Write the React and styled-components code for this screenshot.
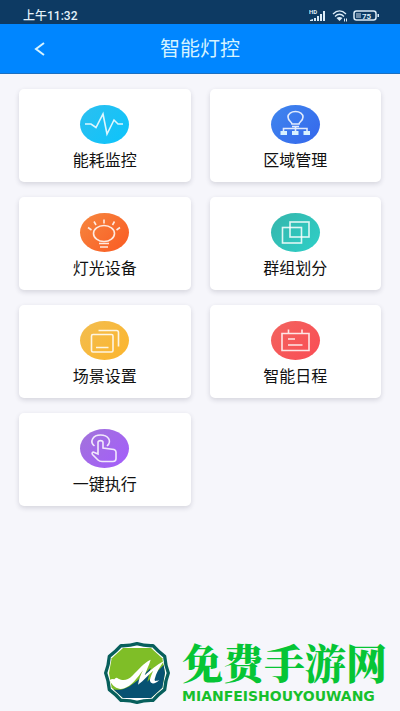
import React from "react";
import styled, { createGlobalStyle } from "styled-components";

const PulseIcon = () => (
  <path d="M5 19h6l5 3.5L23 9l4 20 7-14 4 4h5" />
);

const AreaIcon = () => (
  <>
    <path d="M21 19c0-2-4-3-4-7 0-3 3.2-5.5 7.5-5.5S32 9 32 12c0 4-4 5-4 7zM21 21.5h7M24.5 22v4M12.5 26v-2.5H36V26" />
    <path
      fill="#d9f2ff"
      stroke="none"
      d="M9.5 26H16v4H9.5zM21 26h6.500v4H21zM32.5 26H39v4h-6.500z"
    />
  </>
);

const LightIcon = () => (
  <>
    <ellipse cx="24" cy="20.5" rx="10.5" ry="8" />
    <path d="M19 30.500h10M20 34h8M8 14.500l3.500 2.500M14 8.500l2 3.500M24 6.500v4M34.500 8.500l-2 3.500M40 14.500L36.500 17" />
  </>
);

const GroupIcon = () => (
  <>
    <rect x="11.5" y="14.5" width="19" height="15.5" />
    <rect x="19" y="9" width="19" height="15" />
  </>
);

const SceneIcon = () => (
  <>
    <rect x="11.5" y="13.5" width="21.5" height="17.5" rx="1.5" />
    <path d="M18.500 9.500h18c1.500 0 2 .5 2 2v14M16 26.500h12.500" />
  </>
);

const ScheduleIcon = () => (
  <path d="M11 12.500h27v17H11zM17.500 8.500v4M31 8.500v4M17 18h7M17 24h14.500" />
);

const TouchIcon = () => (
  <path d="M14.500 17C9 12.500 13 6 20.500 6s12 6 6.500 11M18 25V13.500c0-2.500 5-2.500 5 0V19l11 1.500c1.500.5 2 1 2 2.500v6.500c0 2-1 3-3 3H22c-2 0-3-.5-4-1.500l-5.500-5.500c-1-1.500 0-3 2-2z" />
);

const menuItems = [
  { name: "能耗监控", from: "#2cbff0", to: "#0cc4fb", icon: PulseIcon },
  { name: "区域管理", from: "#3f86ee", to: "#3567ec", icon: AreaIcon },
  { name: "灯光设备", from: "#f6873f", to: "#fa5a22", icon: LightIcon },
  { name: "群组划分", from: "#35b5ab", to: "#2ed0c8", icon: GroupIcon },
  { name: "场景设置", from: "#f2bd50", to: "#fcb52c", icon: SceneIcon },
  { name: "智能日程", from: "#f2645f", to: "#fa4c54", icon: ScheduleIcon },
  { name: "一键执行", from: "#a274da", to: "#a45cfc", icon: TouchIcon },
];

const StatusBar = () => (
  <StatusBarStyle>
    <time>上午11:32</time>
    <StatusIcons>
      <svg width="18" height="14" viewBox="0 0 18 14" fill="#dcecf8">
        <text x="0" y="5" fontSize="6" fontWeight="700">
          HD
        </text>
        <path d="M1 11l3-1v2H1zM5 9h2v3H5zM8 7h2v5H8zM11 5h2v7h-2zM14 2h2v10h-2z" />
      </svg>
      <svg width="16" height="12" viewBox="0 0 16 12" fill="none" stroke="#dcecf8">
        <path strokeWidth="1.3" d="M1 4c4-4 9-4 13 0M3 6.500c3-3 6-3 9 0" />
        <path fill="#dcecf8" stroke="none" d="M4.500 8c2-1.500 4-1.500 6 0l-3 3z" />
        <path d="M12.500 8.500v3M14.500 8.500v3" />
      </svg>
      <svg width="27" height="12" viewBox="0 0 27 12">
        <rect x="1" y="1" width="22" height="9" rx="2.5" fill="none" stroke="#dcecf8" strokeWidth="1.5" />
        <path fill="#6f8ba6" d="M3 3h5v5H3z" />
        <path fill="#dcecf8" d="M24.500 4H26v3h-1.500z" />
        <text x="9" y="8.5" fontSize="8" fontWeight="700" fill="#dcecf8">
          75
        </text>
      </svg>
    </StatusIcons>
  </StatusBarStyle>
);

const SiteMark = () => (
  <SiteMarkStyle>
    <svg width="66" height="64" viewBox="0 0 198 192">
      <path
        fill="#fff"
        stroke="#075f5c"
        strokeWidth="10"
        strokeLinejoin="round"
        d="M99 8Q121 15 147 14Q162 31 182 46Q184 72 193 96Q184 120 182 146Q162 161 147 178Q121 177 99 184Q77 177 51 178Q36 161 16 146Q14 120 5 96Q14 72 16 46Q36 31 51 14Q77 15 99 8Z"
      />
      <path
        fill="#7fbe27"
        d="M57 21H141L175 52L183 96L175 140L141 171H57L23 140L15 96L23 52Z"
      />
      <path
        fill="#075272"
        d="M179 72L183 96L175 140L141 171H57L28 145C58 152 82 134 110 110L140 80L130 122Z"
      />
      <path
        fill="#fff"
        d="M17 118q6-6 14-3 5-8 12-2c16 8 28 4 42-9C105 84 119 66 140 56c-5 17-13 32-18 47 19-16 36-32 58-43-13 17-24 37-28 55-1 6 3 6 14 2-12 13-30 15-28-2 2-9 6-18 10-26-15 12-27 28-46 42 3-17 8-30 15-43-17 23-34 46-56 54-16 5-32 0-44-24z"
      />
    </svg>
    <div>
      <SiteName>免费手游网</SiteName>
      <SiteSpelling>MIANFEISHOUYOUWANG</SiteSpelling>
    </div>
  </SiteMarkStyle>
);

const App = () => {
  return (
    <Page>
      <GlobalStyle />
      <StatusBar />
      <Header>
        <BackButton aria-label="返回">
          <svg width="12" height="14" viewBox="0 0 12 14" fill="none" stroke="#d5f3ff" strokeWidth="2">
            <path d="M10 1L2 7l8 6" />
          </svg>
        </BackButton>
        <h1>智能灯控</h1>
      </Header>
      <Menu>
        {menuItems.map((item) => {
          const Icon = item.icon;
          return (
            <Card key={item.name}>
              <IconCircle $from={item.from} $to={item.to}>
                <svg
                  width="49"
                  height="39"
                  viewBox="0 0 49 39"
                  fill="none"
                  stroke="#fff"
                  strokeOpacity="0.85"
                  strokeWidth="1.6"
                >
                  <Icon />
                </svg>
              </IconCircle>
              <span>{item.name}</span>
            </Card>
          );
        })}
      </Menu>
      <SiteMark />
    </Page>
  );
};

export default App;

const GlobalStyle = createGlobalStyle`
  * {
    box-sizing: border-box;
  }
  body {
    margin: 0;
    background: #f6f6fb;
    font-family: Roboto, "Noto Sans CJK SC", sans-serif;
  }
  button {
    border: 0;
    font: inherit;
    cursor: pointer;
  }
  svg {
    display: block;
  }
`;

const Page = styled.div`
  min-height: 100vh;
  display: flex;
  flex-direction: column;
`;

const StatusBarStyle = styled.div`
  height: 24px;
  padding: 7px 20px 0 23px;
  display: flex;
  align-items: center;
  justify-content: space-between;
  background: #0d3a63;
  color: #e4f1fa;
  font-size: 12px;
  font-weight: 500;
  line-height: 16px;
`;

const StatusIcons = styled.div`
  display: flex;
  align-items: center;
  gap: 5px;
`;

const Header = styled.header`
  height: 50px;
  padding: 0 24px;
  display: grid;
  grid-template-columns: 1fr auto 1fr;
  align-items: center;
  background: #0086ff;
  border-bottom: 1px solid #1b6fc0;
  h1 {
    margin: 0;
    color: #d5f3ff;
    font-size: 20px;
    font-weight: 400;
    line-height: 28px;
  }
`;

const BackButton = styled.button`
  justify-self: start;
  padding: 8px 10px;
  background: none;
`;

const Menu = styled.main`
  padding: 15px 19px;
  display: grid;
  grid-template-columns: 1fr 1fr;
  gap: 15px 19px;
`;

const Card = styled.button`
  height: 93px;
  padding: 16px 0 0;
  display: flex;
  flex-direction: column;
  align-items: center;
  gap: 6px;
  background: #fff;
  border-radius: 5px;
  box-shadow: 0 2px 5px rgba(40, 40, 60, 0.16);
  color: #111;
  font-size: 16px;
  line-height: 22px;
`;

const IconCircle = styled.div`
  border-radius: 50%;
  background: linear-gradient(135deg, ${(p) => p.$from}, ${(p) => p.$to});
`;

const SiteMarkStyle = styled.footer`
  margin-top: auto;
  padding: 0 13px 4px;
  display: flex;
  align-items: center;
  justify-content: flex-end;
  gap: 12px;
`;

const SiteName = styled.div`
  color: #06c535;
  font-family: "Noto Serif CJK SC", "Noto Sans CJK SC", serif;
  font-size: 41px;
  font-weight: 900;
  line-height: 46px;
`;

const SiteSpelling = styled.div`
  color: #18c02c;
  font-family: "DejaVu Sans", sans-serif;
  font-size: 14px;
  font-weight: 700;
  line-height: 22px;
`;
